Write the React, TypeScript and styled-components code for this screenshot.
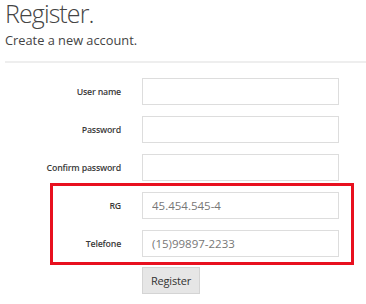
import React from 'react';
import styled, { createGlobalStyle } from 'styled-components';

const GlobalStyle = createGlobalStyle`
    body {
        margin: 0;
        background: #fff;
        font-family: 'Open Sans', 'Liberation Sans', sans-serif;
        color: #333;
    }
`;

const Page = styled.div`
    width: 366px;
    height: 304px;
    overflow: hidden;
`;

const Title = styled.h2`
    margin: 0;
    padding: 0 0 0 5px;
    font-size: 25px;
    font-weight: 300;
    line-height: 26px;
    letter-spacing: -0.9px;
    color: #444;
`;

const Subtitle = styled.h4`
    margin: 4px 0 0;
    padding: 0 0 0 5px;
    font-size: 12.8px;
    font-weight: 400;
    line-height: 20px;
    color: #444;
`;

const Divider = styled.hr`
    margin: 11px 0 15px 5px;
    border: 0;
    border-top: 2px solid #eee;
`;

const Form = styled.form`
    display: flex;
    flex-direction: column;
    gap: 11px;
`;

const Row = styled.div<{ $labelWidth: number }>`
    display: grid;
    grid-template-columns: ${(p) => p.$labelWidth}px 197px;
    column-gap: 21px;
    align-items: center;
`;

const Label = styled.label`
    text-align: right;
    font-size: 8.8px;
    font-weight: 600;
    letter-spacing: -0.2px;
    color: #3a3a3a;
`;

const Input = styled.input`
    box-sizing: border-box;
    height: 27px;
    width: 197px;
    padding: 0 9px;
    border: 1px solid #ddd;
    border-radius: 0;
    font-family: inherit;
    font-size: 11.5px;
    color: #666;
    outline: none;

    &::placeholder {
        color: #777;
    }
`;

const Highlight = styled.div`
    display: flex;
    flex-direction: column;
    gap: 11px;
    margin: -9px 12px -9px 50px;
    padding: 6px 0 5px;
    border: 3px solid #e8101f;
`;

const Actions = styled.div`
    padding-left: 142px;
`;

const Button = styled.button`
    height: 27px;
    padding: 0 8px;
    background: #e6e6e6;
    border: 1px solid #d4d4d4;
    border-radius: 0;
    font-family: inherit;
    font-size: 11px;
    letter-spacing: -0.2px;
    color: #333;
`;

const fields = [
    { label: 'User name', type: 'text' },
    { label: 'Password', type: 'password' },
    { label: 'Confirm password', type: 'password' },
];

const extra = [
    { label: 'RG', placeholder: '45.454.545-4' },
    { label: 'Telefone', placeholder: '(15)99897-2233' },
];

const App: React.FC = () => (
    <Page>
        <GlobalStyle />
        <Title>Register.</Title>
        <Subtitle>Create a new account.</Subtitle>
        <Divider />
        <Form onSubmit={(e) => e.preventDefault()}>
            {fields.map((f) => (
                <Row key={f.label} $labelWidth={121}>
                    <Label>{f.label}</Label>
                    <Input type={f.type} />
                </Row>
            ))}
            <Highlight>
                {extra.map((f) => (
                    <Row key={f.label} $labelWidth={68}>
                        <Label>{f.label}</Label>
                        <Input type="text" placeholder={f.placeholder} />
                    </Row>
                ))}
            </Highlight>
            <Actions>
                <Button type="submit">Register</Button>
            </Actions>
        </Form>
    </Page>
);

export default App;
